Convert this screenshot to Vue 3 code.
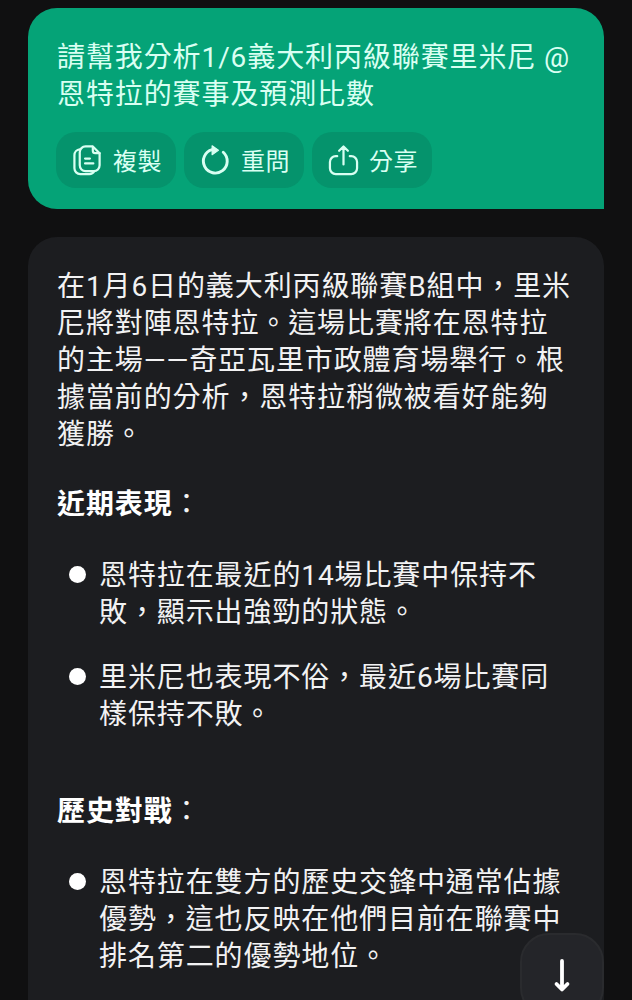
<template>
  <main class="chat">
    <section class="bubble question">
      <p class="text">{{ question }}</p>
      <div class="actions">
        <button class="action" type="button">
          <svg class="icon" viewBox="0 0 32 32">
            <path d="M14 1.500h7.500L28.500 8.500v12.500a6 6 0 0 1-6 6H14a6 6 0 0 1-6-6V7.500a6 6 0 0 1 6-6z" />
            <path d="M21.500 2v4a2.500 2.500 0 0 0 2.500 2.500h4.500M8 4.500A6 6 0 0 0 2.500 10.500V24a6 6 0 0 0 6 6H18a6 6 0 0 0 5-3M13.500 14h5M13.500 19h8.500" />
          </svg>
          <span>複製</span>
        </button>
        <button class="action" type="button">
          <svg class="icon bold" viewBox="0 0 32 32">
            <path d="M24 7.500A12.300 12.300 0 1 1 12.500 4.800" />
            <path class="solid" d="M12.500 .8l6.500 4.700-6.500 4.500z" />
          </svg>
          <span>重問</span>
        </button>
        <button class="action" type="button">
          <svg class="icon" viewBox="0 0 32 32">
            <path d="M9.500 11.500H8a6 6 0 0 0-6 6V24a6 6 0 0 0 6 6h16a6 6 0 0 0 6-6v-6.500a6 6 0 0 0-6-6h-1.500M16 20V2.500M11.500 6L16 1.500 20.500 6" />
          </svg>
          <span>分享</span>
        </button>
      </div>
    </section>

    <section class="bubble answer">
      <p class="text">{{ intro }}</p>
      <template v-for="section in sections" :key="section.title">
        <h2 class="text heading"><strong>{{ section.title }}</strong>{{ '\uFF1A' }}</h2>
        <ul class="list">
          <li v-for="item in section.items" :key="item" class="item">
            <span class="dot"></span>
            <p class="text">{{ item }}</p>
          </li>
        </ul>
      </template>
    </section>

    <button class="scroll-down" type="button" aria-label="scroll down">
      <svg class="arrow" viewBox="0 0 18 34">
        <path d="M9 2v28M3.500 25L9 30.500l5.500-5.500" />
      </svg>
    </button>
  </main>
</template>

<script setup>
const question = '請幫我分析1/6義大利丙級聯賽里米尼 @\n恩特拉的賽事及預測比數'

const intro = [
  '在1月6日的義大利丙級聯賽B組中\uFF0C里米',
  '尼將對陣恩特拉。這場比賽將在恩特拉',
  '的主場——奇亞瓦里市政體育場舉行。根',
  '據當前的分析\uFF0C恩特拉稍微被看好能夠',
  '獲勝。'
].join('\n')

const sections = [
  {
    title: '近期表現',
    items: [
      '恩特拉在最近的14場比賽中保持不\n敗\uFF0C顯示出強勁的狀態。',
      '里米尼也表現不俗\uFF0C最近6場比賽同\n樣保持不敗。'
    ]
  },
  {
    title: '歷史對戰',
    items: ['恩特拉在雙方的歷史交鋒中通常佔據\n優勢\uFF0C這也反映在他們目前在聯賽中\n排名第二的優勢地位。']
  }
]
</script>

<style>
body {
  margin: 0;
  background: #101011;
  overflow: hidden;
}
</style>

<style scoped>
.chat {
  position: relative;
  box-sizing: border-box;
  height: 1000px;
  padding: 8px 28px 0;
  overflow: hidden;
  font-family: Roboto, "Noto Sans CJK TC", sans-serif;
  color: #f2f2f3;
}

.bubble {
  box-sizing: border-box;
  width: 576px;
  padding: 0 29px;
  border-radius: 29px;
}

.question {
  height: 201px;
  padding-top: 31px;
  border-bottom-right-radius: 0;
  background: #05a377;
  color: #d9fff2;
}

.answer {
  height: 800px;
  margin-top: 28px;
  padding-top: 31px;
  background: #1c1d20;
}

.text {
  margin: 0;
  font-size: 28px;
  font-weight: 400;
  line-height: 37px;
  letter-spacing: 0.9px;
  white-space: pre;
}

.heading {
  margin-top: 33px;
}

.heading strong {
  font-weight: 700;
  color: #fff;
}

.list {
  margin: 34px 0 60px;
  padding: 0;
  list-style: none;
}

.item {
  display: flex;
  gap: 13px;
  padding-left: 12px;
}

.item + .item {
  margin-top: 28px;
}

.dot {
  flex: none;
  width: 17px;
  height: 17px;
  margin-top: 9px;
  border-radius: 50%;
  background: #fff;
}

.actions {
  display: flex;
  gap: 8px;
  margin: 19px 0 0 -1px;
}

.action {
  display: flex;
  align-items: center;
  gap: 10px;
  width: 120px;
  height: 56px;
  padding: 0 0 0 16px;
  border: 0;
  border-radius: 20px;
  background: #05936c;
  color: #d9fff2;
  font: 400 24px/36px Roboto, "Noto Sans CJK TC", sans-serif;
  letter-spacing: 0.6px;
  white-space: nowrap;
}

.action span {
  padding-top: 4px;
}

.icon {
  flex: none;
  width: 31px;
  height: 31px;
  fill: none;
  stroke: currentColor;
  stroke-width: 2.3;
  stroke-linecap: round;
  stroke-linejoin: round;
}

.icon.bold {
  stroke-width: 3;
}

.icon .solid {
  fill: currentColor;
  stroke-width: 1.2;
}

.scroll-down {
  position: absolute;
  left: 520px;
  top: 933px;
  display: flex;
  justify-content: center;
  box-sizing: border-box;
  width: 84px;
  height: 84px;
  padding: 24px 0 0;
  border: 2px solid #2a2b2e;
  border-radius: 29px;
  background: #242529;
}

.arrow {
  width: 18px;
  height: 34px;
  fill: none;
  stroke: #fff;
  stroke-width: 3.8;
  stroke-linecap: round;
  stroke-linejoin: round;
}
</style>
